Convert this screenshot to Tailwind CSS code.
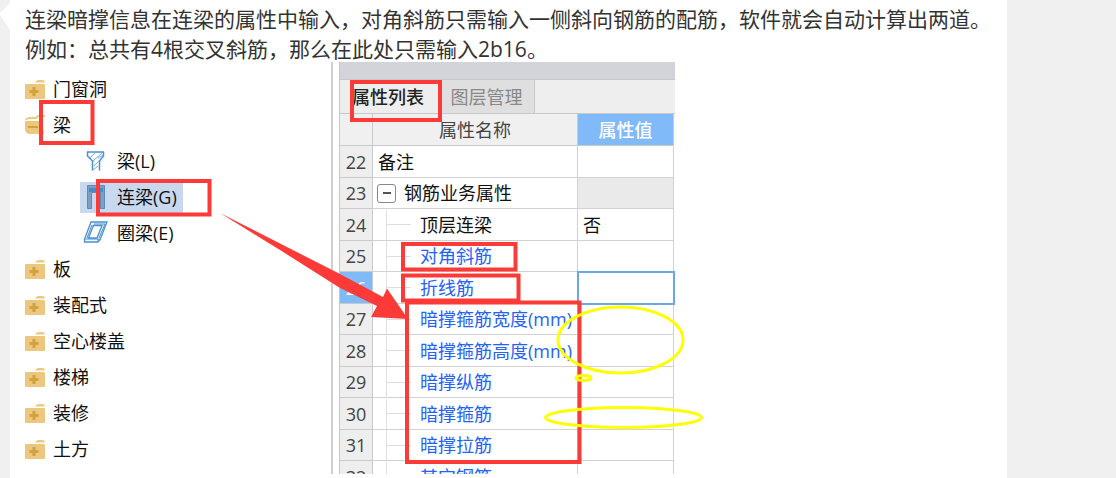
<!DOCTYPE html>
<html lang="zh-CN">
<head>
<meta charset="utf-8">
<title>连梁暗撑</title>
<script src="https://cdn.jsdelivr.net/npm/@tailwindcss/browser@4"></script>
</head>
<body class="bg-[#f0f0f0] font-['Open_Sans','Noto_Sans_CJK_SC',sans-serif]">
<svg width="0" height="0" class="absolute" aria-hidden="true">
  <symbol id="folder" viewBox="0 0 20 20"><path d="M10 3.500Q11 1 13 1H18Q20 1 20 3.500Z" fill="#ecc984"/><rect y="5" width="20" height="15" rx="1" fill="#edc77e"/><path d="M9 8V17M4.500 12.500H13.500" stroke="#d2a143" stroke-width="3"/></symbol>
</svg>
<div class="relative flex min-h-screen overflow-hidden">
  <svg class="h-8 w-[10px] shrink-0" viewBox="0 0 10 32" aria-hidden="true"><path d="M10 3L0 13V15L10 30Z" fill="#fff"/></svg>
  <main class="mr-[109px] min-w-0 flex-1 bg-white pt-[6px]">
    <div class="flex flex-col gap-1 pl-[15px] text-[21px] leading-[26px] whitespace-nowrap text-[#333]">
      <p>连梁暗撑信息在连梁的属性中输入，对角斜筋只需输入一侧斜向钢筋的配筋，软件就会自动计算出两道。</p>
      <p>例如：总共有4根交叉斜筋，那么在此处只需输入2b16。</p>
    </div>
    <div class="flex h-[412px] overflow-hidden text-[18px] leading-6 whitespace-nowrap text-[#111]">
      <nav class="w-[323px] shrink-0 border-r-2 border-[#cdd0d6] pt-[9px] pl-[15px]">
        <ul>
          <li><button class="flex h-9 items-center gap-2"><svg class="size-5"><use href="#folder"/></svg>门窗洞</button></li>
          <li><button class="flex h-9 items-center gap-2"><svg class="size-5" viewBox="0 0 20 20"><path d="M1 5Q2 3 4 3H11L13 1H21V17" fill="none" stroke="#ecc984" stroke-width="2"/><path d="M0 6H17L19 19H4Q0 18 0 14Z" fill="#edc77e"/><path d="M3 12H13" stroke="#d2a143" stroke-width="2"/></svg>梁</button>
            <ul class="pl-[55px]">
              <li class="flex h-9 items-center"><button class="flex h-8 items-center gap-2 pr-[6px]"><svg class="h-6 w-[29px]" viewBox="0 0 29 24" fill="none" stroke="#4a91d4"><path d="M7.500 3V7L12.500 12V21.500M23.500 3V7L19.500 12V21.500M7 3H24" stroke-width="1.500"/><path d="M10 9L15 4M13 12L22 4M14 17L19 12M13 21L18 17M18 9L23 6" stroke="#79addf"/></svg>梁(L)</button></li>
              <li class="flex h-9 items-center"><button class="flex h-[31px] items-center gap-2 bg-[#c8d8ef] pr-[6px]"><svg class="h-[26px] w-[29px]" viewBox="0 0 29 26"><path d="M7.500 1.500H24.500V24.500H20.500V8.500H11.500V24.500H7.500Z" fill="#7d9fc1" stroke="#5d8ab6"/><path d="M9 4H23V8H9Z" fill="#438bd0"/></svg>连梁(G)</button></li>
              <li class="flex h-9 items-center"><button class="flex h-8 items-center gap-2 pr-[6px]"><svg class="h-6 w-[29px]" viewBox="0 0 29 24" fill="#eef5fc" stroke="#4a91d4" stroke-width="1.300"><path fill-rule="evenodd" d="M11 1H27L20 19L18 21H4.500V18ZM13.500 4.500L8.500 17H17L22 4.500Z"/><path d="M4.500 18H18L20 19M18 18V21M14 3H25L19 17M12 4L7 17" fill="none" stroke-width="1"/></svg>圈梁(E)</button></li>
            </ul>
          </li>
          <li><button class="flex h-9 items-center gap-2"><svg class="size-5"><use href="#folder"/></svg>板</button></li>
          <li><button class="flex h-9 items-center gap-2"><svg class="size-5"><use href="#folder"/></svg>装配式</button></li>
          <li><button class="flex h-9 items-center gap-2"><svg class="size-5"><use href="#folder"/></svg>空心楼盖</button></li>
          <li><button class="flex h-9 items-center gap-2"><svg class="size-5"><use href="#folder"/></svg>楼梯</button></li>
          <li><button class="flex h-9 items-center gap-2"><svg class="size-5"><use href="#folder"/></svg>装修</button></li>
          <li><button class="flex h-9 items-center gap-2"><svg class="size-5"><use href="#folder"/></svg>土方</button></li>
        </ul>
      </nav>
      <section class="ml-[6px] w-[336px] shrink-0 border-l border-[#c4c7cc]">
        <div class="h-[17px] bg-[#d2d4da]"></div>
        <div class="flex h-[35px] border-y border-[#c6c8cb] bg-[#eee]" role="tablist">
          <button role="tab" aria-selected="true" class="w-[98px] pl-3 text-left font-medium text-[#222]">属性列表</button>
          <button role="tab" aria-selected="false" class="w-[97px] border-x border-[#c6c8cb] bg-[#dfdfdf] text-[#888]">图层管理</button>
        </div>
        <table class="w-[334px] table-fixed border-separate border-spacing-0 [&_td]:border-r [&_td]:border-b [&_td]:border-[#d2d2d2] [&_td]:p-0 [&_th]:border-r [&_th]:border-b [&_th]:border-[#c8cacd] [&_th]:p-0 [&_th]:font-normal [&_tbody_th]:bg-[#eee] [&_tbody_th]:text-[#444] [&_tbody>tr]:h-[31px] [&_tbody>tr:nth-child(odd)]:h-8">
          <colgroup><col class="w-[33px]"><col class="w-[205px]"><col class="w-[96px]"></colgroup>
          <thead>
            <tr class="h-8 bg-[#f0f0f0] text-[#444]"><th></th><th scope="col">属性名称</th><th scope="col" class="bg-[#80baf9] text-white"><span class="font-medium">属性值</span></th></tr>
          </thead>
          <tbody>
            <tr><th scope="row">22</th><td><div class="pl-[5px]">备注</div></td><td></td></tr>
            <tr><th scope="row">23</th><td><div class="flex items-center gap-2 pl-1"><button aria-label="折叠" class="flex size-[19px] items-center justify-center rounded-[3px] border border-[#888]"><span class="h-[2px] w-2 bg-[#555]"></span></button>钢筋业务属性</div></td><td class="bg-[#eaeaea]"></td></tr>
            <tr><th scope="row">24</th><td><div class="ml-[13px] flex h-[30px] items-center gap-[9px] border-l border-[#e0e0e0]"><span class="h-px w-6 bg-[#ddd]"></span>顶层连梁</div></td><td><div class="pl-[5px]">否</div></td></tr>
            <tr class="text-[#2463f5]"><th scope="row">25</th><td><div class="ml-[13px] flex h-[30px] items-center gap-[9px] border-l border-[#e0e0e0]"><span class="h-px w-6 bg-[#ddd]"></span>对角斜筋</div></td><td></td></tr>
            <tr class="text-[#2463f5]"><th scope="row" class="bg-[#80baf9]! text-white!">26</th><td><div class="ml-[13px] flex h-[30px] items-center gap-[9px] border-l border-[#e0e0e0]"><span class="h-px w-6 bg-[#ddd]"></span>折线筋</div></td><td class="outline-2 -outline-offset-1 outline-[#6ba7e5]"></td></tr>
            <tr class="text-[#2463f5]"><th scope="row">27</th><td><div class="ml-[13px] flex h-[30px] items-center gap-[9px] border-l border-[#e0e0e0]"><span class="h-px w-6 bg-[#ddd]"></span>暗撑箍筋宽度(mm)</div></td><td></td></tr>
            <tr class="text-[#2463f5]"><th scope="row">28</th><td><div class="ml-[13px] flex h-[30px] items-center gap-[9px] border-l border-[#e0e0e0]"><span class="h-px w-6 bg-[#ddd]"></span>暗撑箍筋高度(mm)</div></td><td></td></tr>
            <tr class="text-[#2463f5]"><th scope="row">29</th><td><div class="ml-[13px] flex h-[30px] items-center gap-[9px] border-l border-[#e0e0e0]"><span class="h-px w-6 bg-[#ddd]"></span>暗撑纵筋</div></td><td></td></tr>
            <tr class="text-[#2463f5]"><th scope="row">30</th><td><div class="ml-[13px] flex h-[30px] items-center gap-[9px] border-l border-[#e0e0e0]"><span class="h-px w-6 bg-[#ddd]"></span>暗撑箍筋</div></td><td></td></tr>
            <tr class="text-[#2463f5]"><th scope="row">31</th><td><div class="ml-[13px] flex h-[30px] items-center gap-[9px] border-l border-[#e0e0e0]"><span class="h-px w-6 bg-[#ddd]"></span>暗撑拉筋</div></td><td></td></tr>
            <tr class="text-[#2463f5]"><th scope="row">32</th><td><div class="ml-[13px] flex h-[30px] items-center gap-[9px] border-l border-[#e0e0e0]"><span class="h-px w-6 bg-[#ddd]"></span>其它钢筋</div></td><td></td></tr>
          </tbody>
        </table>
      </section>
    </div>
  </main>
  <svg class="pointer-events-none absolute top-0 left-0 h-[478px] w-[710px]" viewBox="0 0 710 478" fill="none" aria-hidden="true">
    <g stroke="#fc3a38" stroke-width="4">
      <rect x="41" y="102" width="51.500" height="41"/>
      <rect x="98" y="181" width="111.500" height="33.500"/>
      <rect x="352" y="82" width="88" height="38"/>
      <rect x="403" y="244" width="112.500" height="25.500"/>
      <rect x="403" y="275.500" width="115.500" height="25"/>
      <rect x="407" y="302.500" width="172.500" height="159.500"/>
    </g>
    <path d="M220 213L340 274L383 297L387 288.500L408 319L371 317L377 306L340 288L280 250Z" fill="#fc3a38"/>
    <g stroke="#ff0" stroke-width="3">
      <ellipse cx="620.500" cy="340" rx="62.500" ry="33"/>
      <ellipse cx="583.500" cy="378" rx="7.500" ry="2.500"/>
      <ellipse cx="623.500" cy="417.500" rx="78" ry="10"/>
    </g>
  </svg>
</div>
</body>
</html>
